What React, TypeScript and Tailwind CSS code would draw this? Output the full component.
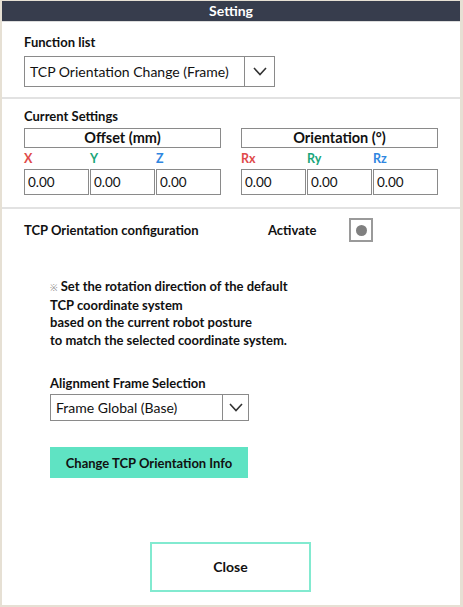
import React from 'react';

const font = { fontFamily: 'Lato, "Noto Sans", sans-serif' };

function Chevron() {
  return (
    <svg width="14" height="9" viewBox="0 0 14 9" fill="none">
      <polyline points="1,1 7,7.5 13,1" stroke="#333" strokeWidth="1.6" />
    </svg>
  );
}

function Select({ value, width, height, arrowWidth }: { value: string; width: string; height: string; arrowWidth: string }) {
  return (
    <div className={`flex ${width} ${height} border border-[#8a8a8a] bg-white`}>
      <div className="flex flex-1 items-center pl-[5px] text-[14px] leading-[16px] text-[#111]">{value}</div>
      <div className={`flex ${arrowWidth} items-center justify-center border-l border-[#8a8a8a]`}>
        <Chevron />
      </div>
    </div>
  );
}

function ValueGroup({ title, labels }: { title: string; labels: { name: string; color: string }[] }) {
  return (
    <div className="flex w-[198px] flex-col">
      <div className="flex h-[20px] items-center justify-center border border-[#8a8a8a] text-[14.5px] font-bold leading-[16px] text-[#111]">
        {title}
      </div>
      <div className="flex gap-[1px]">
        {labels.map((l) => (
          <div key={l.name} className="flex flex-1 flex-col">
            <div className={`h-[21px] pt-[3px] text-[12.5px] font-bold leading-[16px] ${l.color}`}>{l.name}</div>
            <div className="flex h-[26px] items-center border border-[#8a8a8a] pl-[3px] text-[13.5px] leading-[16px] text-[#111]">
              0.00
            </div>
          </div>
        ))}
      </div>
    </div>
  );
}

export default function App() {
  return (
    <div className="h-[607px] w-[463px] bg-[#e6e0d4] pb-[2px] pl-[2px] pr-[3px] pt-[1px]" style={font}>
      <div className="flex h-full flex-col bg-white">
        {/* 헤더 */}
        <div className="flex h-[20px] items-center justify-center bg-[#373d4d] text-[14px] font-bold leading-[16px] text-white">
          Setting
        </div>
        <div className="h-[1px] bg-[#dcdcdc]" />

        {/* Function list */}
        <div className="border-b-2 border-[#e2e2e2] px-[22px] pb-[10px] pt-[12px]">
          <div className="mb-[6px] text-[13px] font-bold leading-[16px] text-[#111]">Function list</div>
          <Select value="TCP Orientation Change (Frame)" width="w-[251px]" height="h-[31px]" arrowWidth="w-[30px]" />
        </div>

        {/* Current Settings */}
        <div className="border-b-2 border-[#e2e2e2] px-[22px] pb-[12px] pt-[9px]">
          <div className="mb-[4px] text-[13px] font-bold leading-[16px] text-[#111]">Current Settings</div>
          <div className="flex gap-[20px]">
            <ValueGroup
              title="Offset (mm)"
              labels={[
                { name: 'X', color: 'text-[#e04a4a]' },
                { name: 'Y', color: 'text-[#1aa67a]' },
                { name: 'Z', color: 'text-[#2f86e0]' },
              ]}
            />
            <ValueGroup
              title="Orientation (°)"
              labels={[
                { name: 'Rx', color: 'text-[#e04a4a]' },
                { name: 'Ry', color: 'text-[#1aa67a]' },
                { name: 'Rz', color: 'text-[#2f86e0]' },
              ]}
            />
          </div>
        </div>

        {/* TCP Orientation configuration */}
        <div className="flex flex-1 flex-col px-[22px] pt-[9px]">
          <div className="flex h-[24px] items-center">
            <div className="w-[244px] text-[13px] font-bold leading-[16px] text-[#111]">TCP Orientation configuration</div>
            <div className="w-[81px] text-[13px] font-bold leading-[16px] text-[#111]">Activate</div>
            <div className="flex h-[24px] w-[24px] items-center justify-center border-2 border-[#9a9a9a]">
              <div className="h-[11px] w-[11px] rounded-full bg-[#808080]" />
            </div>
          </div>

          <div className="mt-[36px] pl-[26px] text-[13px] font-bold leading-[17.5px] text-[#111]">
            <div>
              <span className="text-[9px] font-normal text-[#888]">※</span> Set the rotation direction of the default
            </div>
            <div>TCP coordinate system</div>
            <div>based on the current robot posture</div>
            <div>to match the selected coordinate system.</div>
          </div>

          <div className="mt-[26px] pl-[26px]">
            <div className="mb-[3px] text-[13px] font-bold leading-[16px] text-[#111]">Alignment Frame Selection</div>
            <Select value="Frame Global (Base)" width="w-[199px]" height="h-[27px]" arrowWidth="w-[26px]" />
            <button className="mt-[26px] flex h-[31px] w-[198px] items-center justify-center bg-[#5fe3c3] text-[13px] font-bold leading-[16px] text-[#111]">
              Change TCP Orientation Info
            </button>
          </div>

          <div className="mt-[64px] flex justify-center">
            <button className="ml-[-1px] flex h-[50px] w-[161px] items-center justify-center border-2 border-[#82ead0] text-[14px] font-bold leading-[16px] text-[#111]">
              Close
            </button>
          </div>
        </div>
      </div>
    </div>
  );
}
